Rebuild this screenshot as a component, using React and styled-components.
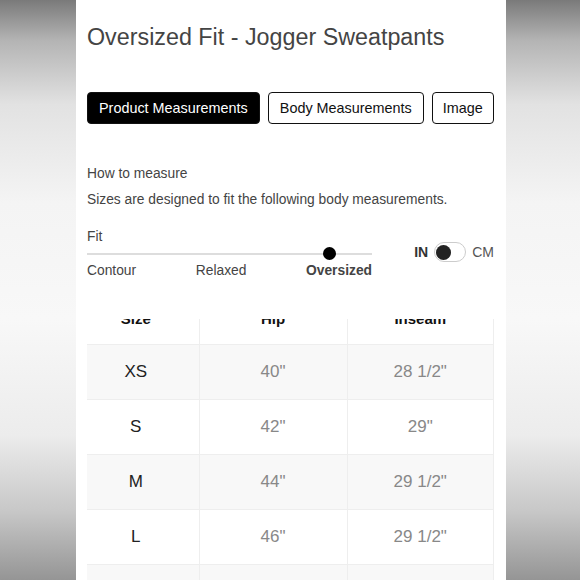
import styled, { createGlobalStyle } from "styled-components"

const GlobalStyle = createGlobalStyle`
  html, body {
    margin: 0;
    padding: 0;
  }
  body {
    font-family: "Liberation Sans", Arial, sans-serif;
    background: linear-gradient(
      180deg,
      #7a7a7a 0%,
      #b4b4b4 7%,
      #e2e2e2 18%,
      #f4f4f4 35%,
      #f8f8f8 55%,
      #ececec 75%,
      #c8c8c8 88%,
      #959595 100%
    );
    min-height: 580px;
  }
`

const Page = styled.div`
  height: 580px;
  display: flex;
`

const Panel = styled.div`
  width: 430px;
  height: 580px;
  margin-left: 76px;
  background: #fff;
  padding: 23px 12px 0 11px;
  box-sizing: border-box;
  display: flex;
  flex-direction: column;
  overflow: hidden;
`

const Title = styled.h1`
  margin: 0;
  font-size: 23.3px;
  line-height: 28px;
  font-weight: 400;
  color: #444;
`

const Tabs = styled.div`
  display: flex;
  gap: 8px;
  margin-top: 41px;
`

const Tab = styled.button`
  flex-shrink: 0;
  white-space: nowrap;
  height: 32px;
  padding: 0 ${(p) => (p.$narrow ? 10 : 11)}px;
  border-radius: 4px;
  font-family: inherit;
  font-size: 14.4px;
  border: 1px solid #111;
  background: ${(p) => (p.$active ? "#000" : "#fff")};
  color: ${(p) => (p.$active ? "#fff" : "#111")};
  cursor: pointer;
`

const Text = styled.p`
  margin: ${(p) => p.$mt || 0}px 0 0;
  font-size: 13.8px;
  line-height: 20px;
  color: #444;
`

const FitRow = styled.div`
  display: flex;
  justify-content: space-between;
  align-items: flex-start;
`

const FitBlock = styled.div`
  width: 285px;
`

const Track = styled.div`
  position: relative;
  height: 14px;
  display: flex;
  align-items: center;

  &::before {
    content: "";
    flex: 1;
    height: 2px;
    background: #ddd;
  }
`

const Knob = styled.span`
  position: absolute;
  left: 236px;
  top: 0;
  width: 13px;
  height: 13px;
  border-radius: 50%;
  background: #000;
`

const FitLabels = styled.div`
  display: flex;
  justify-content: space-between;
  font-size: 13.8px;
  line-height: 20px;
  color: #444;
`

const FitLabel = styled.span`
  font-weight: ${(p) => (p.$active ? 700 : 400)};
`

const UnitToggle = styled.div`
  display: flex;
  align-items: center;
  gap: 6px;
  margin-top: 32px;
  font-size: 14px;
  color: #555;
`

const UnitLabel = styled.span`
  font-weight: ${(p) => (p.$active ? 700 : 400)};
  color: ${(p) => (p.$active ? "#333" : "#555")};
`

const Switch = styled.span`
  width: 32px;
  height: 20px;
  box-sizing: border-box;
  border: 1px solid #ccc;
  border-radius: 10px;
  display: flex;
  align-items: center;
  padding-left: 1px;

  &::after {
    content: "";
    width: 15px;
    height: 15px;
    border-radius: 50%;
    background: #222;
  }
`

const TableScroll = styled.div`
  flex: 1;
  margin-top: 38px;
  overflow: hidden;
`

const Table = styled.table`
  width: 100%;
  margin-top: -27px;
  border-collapse: collapse;
  table-layout: fixed;
  font-family: "Liberation Sans", Arial, sans-serif;
`

const HeadCell = styled.th`
  padding: 18px ${(p) => (p.$first ? 14 : 0)}px 16px 0;
  line-height: 18px;
  font-size: 15px;
  font-weight: 700;
  color: #111;
  text-align: center;
  border-bottom: 1px solid #eee;
  border-left: ${(p) => (p.$first ? "none" : "1px solid #eee")};
  border-right: ${(p) => (p.$last ? "1px solid #eee" : "none")};
`

const Row = styled.tr`
  background: ${(p) => (p.$striped ? "#f8f8f8" : "#fff")};
`

const Cell = styled.td`
  height: 54px;
  padding: 0 ${(p) => (p.$first ? 14 : 0)}px 0 0;
  text-align: center;
  font-size: 17px;
  color: ${(p) => (p.$first ? "#222" : "#888")};
  border-bottom: 1px solid #eee;
  border-left: ${(p) => (p.$first ? "none" : "1px solid #eee")};
  border-right: ${(p) => (p.$last ? "1px solid #eee" : "none")};
`

const rows = [
  ["XS", '40"', '28 1/2"'],
  ["S", '42"', '29"'],
  ["M", '44"', '29 1/2"'],
  ["L", '46"', '29 1/2"'],
  ["XL", '48"', '30"'],
]

export default function App() {
  return (
    <Page>
      <GlobalStyle />
      <Panel>
        <Title>Oversized Fit - Jogger Sweatpants</Title>
        <Tabs>
          <Tab $active>Product Measurements</Tab>
          <Tab>Body Measurements</Tab>
          <Tab $narrow>Image</Tab>
        </Tabs>
        <Text $mt={40}>How to measure</Text>
        <Text $mt={6}>Sizes are designed to fit the following body measurements.</Text>
        <FitRow>
          <FitBlock>
            <Text $mt={17}>Fit</Text>
            <Track>
              <Knob />
            </Track>
            <FitLabels>
              <FitLabel>Contour</FitLabel>
              <FitLabel>Relaxed</FitLabel>
              <FitLabel $active>Oversized</FitLabel>
            </FitLabels>
          </FitBlock>
          <UnitToggle>
            <UnitLabel $active>IN</UnitLabel>
            <Switch />
            <UnitLabel>CM</UnitLabel>
          </UnitToggle>
        </FitRow>
        <TableScroll>
          <Table>
            <colgroup>
              <col style={{ width: 112 }} />
              <col style={{ width: 148 }} />
              <col />
            </colgroup>
            <thead>
              <tr>
                <HeadCell $first>Size</HeadCell>
                <HeadCell>Hip</HeadCell>
                <HeadCell $last>Inseam</HeadCell>
              </tr>
            </thead>
            <tbody>
              {rows.map((r, i) => (
                <Row key={r[0]} $striped={i % 2 === 0}>
                  <Cell $first>{r[0]}</Cell>
                  <Cell>{r[1]}</Cell>
                  <Cell $last>{r[2]}</Cell>
                </Row>
              ))}
            </tbody>
          </Table>
        </TableScroll>
      </Panel>
    </Page>
  )
}
